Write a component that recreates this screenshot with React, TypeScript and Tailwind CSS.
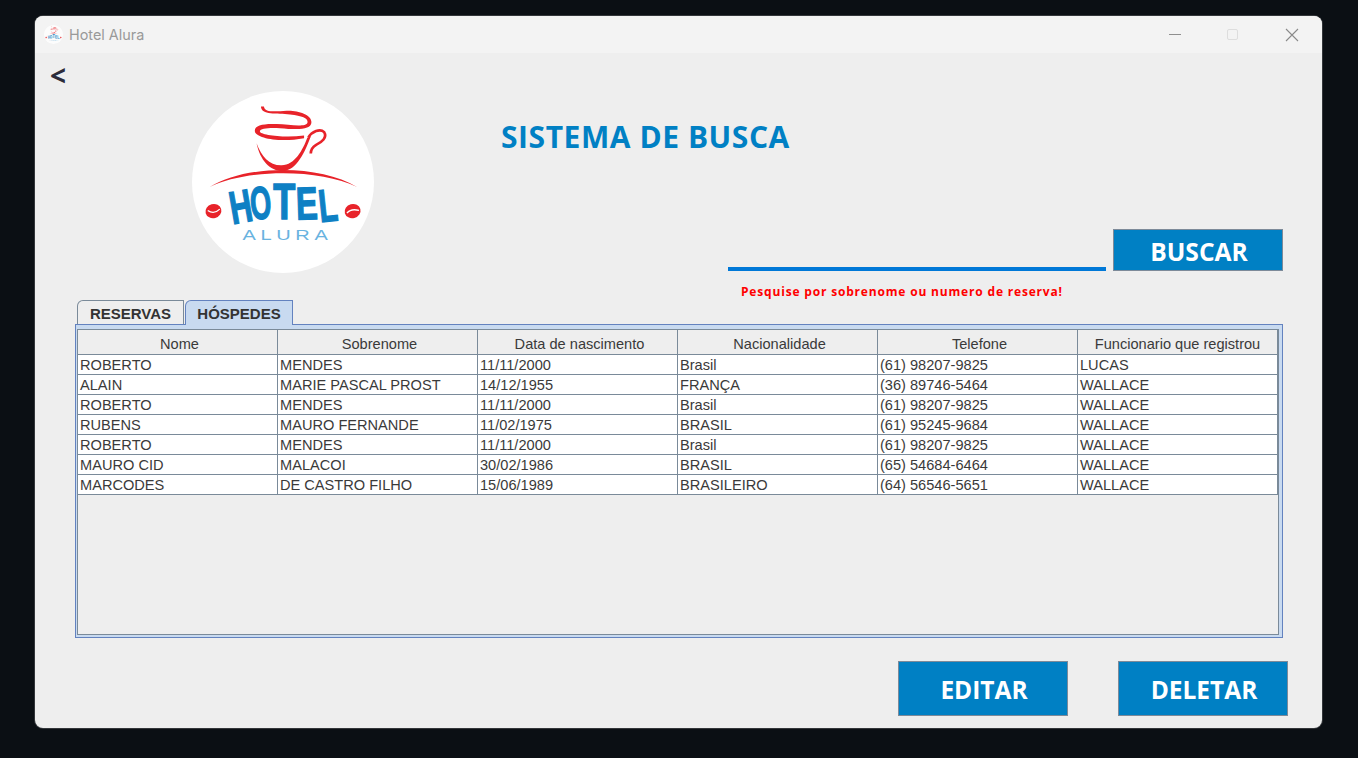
import React from 'react';

const columns = ['Nome', 'Sobrenome', 'Data de nascimento', 'Nacionalidade', 'Telefone', 'Funcionario que registrou'];

const guests = [
  ['ROBERTO', 'MENDES', '11/11/2000', 'Brasil', '(61) 98207-9825', 'LUCAS'],
  ['ALAIN', 'MARIE PASCAL PROST', '14/12/1955', 'FRANÇA', '(36) 89746-5464', 'WALLACE'],
  ['ROBERTO', 'MENDES', '11/11/2000', 'Brasil', '(61) 98207-9825', 'WALLACE'],
  ['RUBENS', 'MAURO FERNANDE', '11/02/1975', 'BRASIL', '(61) 95245-9684', 'WALLACE'],
  ['ROBERTO', 'MENDES', '11/11/2000', 'Brasil', '(61) 98207-9825', 'WALLACE'],
  ['MAURO CID', 'MALACOI', '30/02/1986', 'BRASIL', '(65) 54684-6464', 'WALLACE'],
  ['MARCODES', 'DE CASTRO FILHO', '15/06/1989', 'BRASILEIRO', '(64) 56546-5651', 'WALLACE'],
];

const hotelLetters = [
  { ch: 'H', x: 158, y: 417, r: -10, sx: 0.68, sy: 1.02 },
  { ch: 'O', x: 215, y: 404, r: -5, sx: 0.6, sy: 1.02 },
  { ch: 'T', x: 280, y: 402, r: 0, sx: 0.8, sy: 1.09 },
  { ch: 'E', x: 349, y: 404, r: -2, sx: 0.72, sy: 1.02 },
  { ch: 'L', x: 420, y: 411, r: -6, sx: 0.68, sy: 1.02 },
];

function Logo({ className }: { className?: string }) {
  return (
    <svg viewBox="37 19 544 544" className={className}>
      <circle cx="309" cy="291" r="272" fill="#ffffff" />
      {/* steam */}
      <path
        d="M243 65 C244 92 290 84 330 89 C370 94 385 100 382 114 C378 128 330 120 290 118 C250 116 222 122 225 140 C228 160 300 174 372 160 L372 152 C310 160 240 150 240 140 C238 130 270 128 300 130 C345 134 394 138 394 112 C394 88 350 76 320 78 C285 80 254 84 252 65 Z"
        fill="#e8232a"
      />
      {/* cup */}
      <path
        d="M230 175 C240 225 270 258 308 258 C350 258 375 200 392 155 L382 158 C368 195 345 240 305 241 C268 242 245 215 230 175 Z"
        fill="#e8232a"
      />
      <path
        d="M385 158 C395 140 420 130 432 142 C442 158 425 172 408 180 C398 186 392 195 392 206"
        fill="none"
        stroke="#e8232a"
        strokeWidth="8"
      />
      <path d="M90 306 C200 238 420 238 530 306 C420 251 200 251 90 306 Z" fill="#e8232a" />
      {/* beans */}
      <ellipse cx="101" cy="378" rx="24" ry="21" fill="#e8232a" transform="rotate(-15 101 378)" />
      <path d="M84 376 C95 384 108 384 120 372" fill="none" stroke="#ffffff" strokeWidth="4" />
      <ellipse cx="517" cy="378" rx="24" ry="21" fill="#e8232a" transform="rotate(-15 517 378)" />
      <path d="M500 384 C510 372 522 372 536 376" fill="none" stroke="#ffffff" strokeWidth="4" />
      {hotelLetters.map((l) => (
        <text
          key={l.ch}
          transform={`translate(${l.x} ${l.y}) rotate(${l.r}) scale(${l.sx} ${l.sy})`}
          fontFamily="'Liberation Sans', sans-serif"
          fontWeight="700"
          fontSize="135"
          fill="#0e80c4"
          stroke="#0e80c4"
          strokeWidth="4"
        >
          {l.ch}
        </text>
      ))}
      <text
        transform="translate(188 463) scale(1.3 1)"
        textLength="196"
        lengthAdjust="spacing"
        fontFamily="'Liberation Sans', sans-serif"
        fontSize="46"
        fill="#69b3e0"
      >
        ALURA
      </text>
    </svg>
  );
}

function ActionButton({ label, className }: { label: string; className: string }) {
  return (
    <button className={`flex items-center justify-center border border-[#7d8a99] bg-[#0080c4] pl-[2px] pt-[4px] font-['Open_Sans',sans-serif] font-bold text-white ${className}`}>
      {label}
    </button>
  );
}

export default function App() {
  return (
    <div className="h-[758px] w-[1358px] overflow-hidden bg-[#0b0f14] pl-[35px] pt-[16px]">
      <div className="flex h-[712px] w-[1287px] flex-col overflow-hidden rounded-[8px] bg-[#eeeeee] ring-1 ring-[#33363a]">
        {/* Title bar */}
        <div className="flex h-[37px] shrink-0 items-center bg-[#f3f3f3] pl-[9px]">
          <Logo className="h-[19px] w-[19px] opacity-80" />
          <span className="ml-[6px] font-['Inter',sans-serif] text-[14.4px] text-[#999999]">Hotel Alura</span>
          <div className="ml-auto flex items-center pr-[23px]">
            <svg width="14" height="14" viewBox="0 0 14 14" className="mr-[44px]">
              <path d="M1 6.5 H13" stroke="#8f8f8f" strokeWidth="1" />
            </svg>
            <svg width="14" height="14" viewBox="0 0 14 14" className="mr-[45px]">
              <rect x="1.5" y="1.5" width="10" height="10" rx="1.5" fill="none" stroke="#dddddd" strokeWidth="1" />
            </svg>
            <svg width="14" height="14" viewBox="0 0 14 14">
              <path d="M1 1 L13 13 M13 1 L1 13" stroke="#8a8a8a" strokeWidth="1.1" />
            </svg>
          </div>
        </div>

        {/* Header */}
        <div className="flex h-[247px] shrink-0">
          <div className="w-[157px] pl-[15px] pt-[4px] font-['Open_Sans',sans-serif] text-[28px] leading-[36px] font-bold text-[#2c2c3a]">
            &lt;
          </div>
          <Logo className="mt-[38px] h-[182px] w-[182px]" />
          <div className="ml-[127px] flex flex-col">
            <h1 className="mt-[64px] font-['Open_Sans',sans-serif] text-[30px] leading-[40px] font-bold tracking-[0.56px] text-[#0080c4]">
              SISTEMA DE BUSCA
            </h1>
            <div className="mt-[72px] ml-[227px] flex items-end">
              <div className="h-[4px] w-[378px] bg-[#0078d7]" />
              <ActionButton label="BUSCAR" className="ml-[7px] h-[42px] w-[170px] text-[24.6px]" />
            </div>
            <p className="ml-[240px] mt-[12px] font-['Open_Sans',sans-serif] text-[12px] leading-[17px] font-bold tracking-[0.82px] text-[#ff0000]">
              Pesquise por sobrenome ou numero de reserva!
            </p>
          </div>
        </div>

        {/* Tabs */}
        <div className="ml-[42px] flex h-[24px] shrink-0 items-end font-['Liberation_Sans',sans-serif] text-[15px] font-bold text-[#333333]">
          <div className="flex h-[24px] w-[107px] items-center justify-center rounded-tl-[6px] border border-b-0 border-[#7a8a99] pt-[3px]">
            RESERVAS
          </div>
          <div className="relative z-10 ml-[1px] flex h-[25px] w-[108px] -mb-[1px] items-center justify-center rounded-tl-[6px] border border-b-0 border-[#6382bf] bg-[#c8daf0] pt-[2px]">
            HÓSPEDES
          </div>
        </div>

        {/* Table panel */}
        <div className="ml-[40px] h-[314px] w-[1208px] shrink-0 border border-[#6382bf] bg-[#c8daf0] pb-[2px] pl-[1px] pr-[3px] pt-[4px]">
          <div className="h-full border border-[#7a8a99] bg-[#eeeeee]">
            <table className="w-[1200px] table-fixed border-separate border-spacing-0 font-['Liberation_Sans',sans-serif] text-[14.6px] leading-[16px] text-[#3a3a3a]">
              <thead>
                <tr className="h-[25px]">
                  {columns.map((col) => (
                    <th key={col} className="border-b border-r border-[#7a8a99] pb-0 pl-[4px] pr-0 pt-[3px] text-center font-normal last:pl-0">
                      {col}
                    </th>
                  ))}
                </tr>
              </thead>
              <tbody>
                {guests.map((row, i) => (
                  <tr key={i} className="h-[20px]">
                    {row.map((cell, j) => (
                      <td key={j} className="overflow-hidden border-b border-r border-[#7a8a99] bg-white py-0 pl-[2px] pr-0 whitespace-nowrap">
                        {cell}
                      </td>
                    ))}
                  </tr>
                ))}
              </tbody>
            </table>
          </div>
        </div>

        {/* Actions */}
        <div className="mt-[23px] flex justify-end gap-[50px] pr-[34px]">
          <ActionButton label="EDITAR" className="h-[55px] w-[170px] text-[24.5px]" />
          <ActionButton label="DELETAR" className="h-[55px] w-[170px] text-[24.5px]" />
        </div>
      </div>
    </div>
  );
}
